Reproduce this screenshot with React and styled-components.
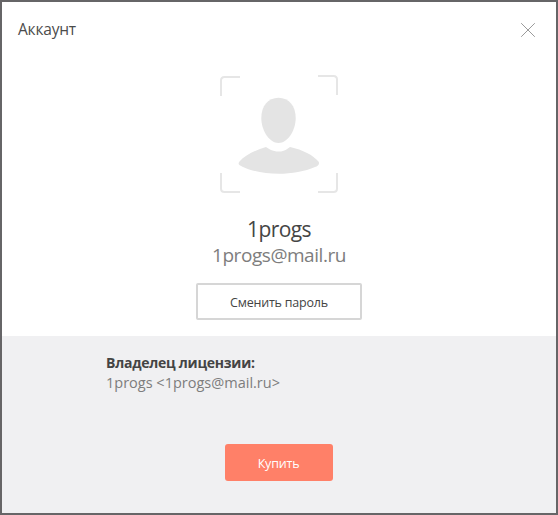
import React from "react";
import styled, { createGlobalStyle } from "styled-components";

const GlobalStyle = createGlobalStyle`
  *, *::before, *::after { box-sizing: border-box; }
  html, body { margin: 0; padding: 0; overflow: hidden; }
  body { font-family: "Open Sans", "Noto Sans", sans-serif; }
`;

const Dialog = styled.main`
  width: 558px;
  height: 515px;
  display: flex;
  flex-direction: column;
  background: #fff;
  border: 2px solid #666567;
`;

const Header = styled.header`
  height: 56px;
  flex: none;
  display: flex;
  align-items: center;
  justify-content: space-between;
  padding: 0 20px 0 16px;
`;

const Title = styled.h1`
  margin: 0 0 2px;
  font-size: 15.5px;
  font-weight: 400;
  line-height: 20px;
  letter-spacing: -0.2px;
  color: #4b4b4b;
`;

const CloseButton = styled.button`
  width: 16px;
  height: 16px;
  padding: 0;
  border: 0;
  background: none;
  svg { display: block; }
`;

const Profile = styled.section`
  height: 278px;
  flex: none;
  display: flex;
  flex-direction: column;
  align-items: center;
  padding-top: 15px;
`;

const Avatar = styled.svg`
  display: block;
  width: 120px;
  height: 120px;
`;

const UserName = styled.div`
  margin-top: 22px;
  font-size: 21px;
  line-height: 28px;
  letter-spacing: -0.6px;
  color: #454545;
`;

const UserEmail = styled.div`
  margin-top: -1px;
  font-size: 19px;
  line-height: 26px;
  letter-spacing: -0.45px;
  color: #7d7d7d;
`;

const Button = styled.button`
  flex: none;
  display: flex;
  align-items: center;
  justify-content: center;
  padding: 2px 0 0;
  font-family: inherit;
  font-size: 12.5px;
  line-height: 16px;
  letter-spacing: -0.2px;
`;

const OutlineButton = styled(Button)`
  width: 166px;
  height: 37px;
  margin-top: 15px;
  border: 2px solid #d6d6d6;
  border-radius: 2px;
  background: #fff;
  color: #444;
`;

const License = styled.section`
  flex: 1;
  display: flex;
  flex-direction: column;
  padding: 17px 105px 0 104px;
  background: #f0f0f2;
`;

const LicenseLabel = styled.div`
  font-size: 14px;
  font-weight: 700;
  line-height: 20px;
  letter-spacing: -0.25px;
  color: #444;
`;

const LicenseOwner = styled.div`
  font-size: 14.5px;
  line-height: 20px;
  color: #7d7d7d;
`;

const BuyButton = styled(Button)`
  width: 108px;
  height: 37px;
  align-self: center;
  margin-top: 51px;
  border: 0;
  border-radius: 3px;
  background: #ff8068;
  color: #fff;
`;

export default function App() {
  return (
    <>
      <GlobalStyle />
      <Dialog>
        <Header>
          <Title>Аккаунт</Title>
          <CloseButton aria-label="Закрыть">
            <svg width="16" height="16" viewBox="0 0 16 16" fill="none" stroke="#9a9a9a">
              <path d="M1.200 1.200 14.800 14.800M14.800 1.200 1.200 14.800" />
            </svg>
          </CloseButton>
        </Header>
        <Profile>
          <Avatar viewBox="0 0 120 120">
            <path
              d="M2 23V7.500Q2 4 5.500 4H21M99 3H114.500Q118 3 118 6.500V22M118 100V115.500Q118 119 114.500 119H99M21 119H5.500Q2 119 2 115.500V100"
              fill="none"
              stroke="#e6e6e6"
              strokeWidth="2"
            />
            <g fill="#e4e4e4">
              <path d="M59.500 24.700C70 24.700 76.700 33 76.700 45C76.700 57 69 70 59.500 70C50 70 42.300 57 42.300 45C42.300 33 49 24.700 59.500 24.700Z" />
              <path d="M47 74C50 76 53 78.500 60 78.500C66 78.500 68 76 71 74C84 77 94 82 99.500 88.500C101 91 99 93 96 94C76 103 43 103 24 94C20 92 18.500 91 20.500 88.500C26 82 37 77 47 74Z" />
            </g>
          </Avatar>
          <UserName>1progs</UserName>
          <UserEmail>1progs@mail.ru</UserEmail>
          <OutlineButton>Сменить пароль</OutlineButton>
        </Profile>
        <License>
          <LicenseLabel>Владелец лицензии:</LicenseLabel>
          <LicenseOwner>1progs &lt;1progs@mail.ru&gt;</LicenseOwner>
          <BuyButton>Купить</BuyButton>
        </License>
      </Dialog>
    </>
  );
}
